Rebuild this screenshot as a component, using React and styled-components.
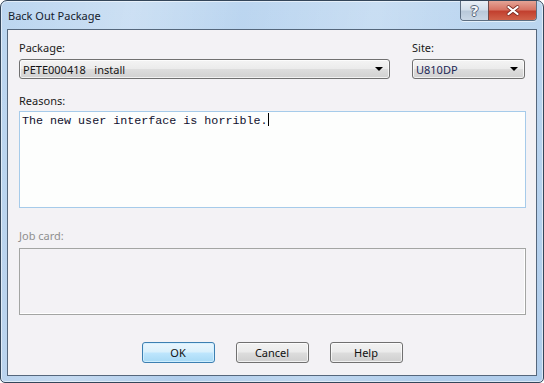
import React from 'react';
import styled, { createGlobalStyle } from 'styled-components';

const GlobalStyle = createGlobalStyle`
  html, body {
    margin: 0;
    padding: 0;
    background: #ffffff;
  }
  body {
    width: 544px;
    height: 383px;
    overflow: hidden;
    font-family: "Noto Sans", "Liberation Sans", sans-serif;
  }
`;

const Window = styled.div`
  box-sizing: border-box;
  width: 544px;
  height: 383px;
  display: flex;
  flex-direction: column;
  padding: 0 6px 6px 6px;
  border: 1px solid #34465a;
  border-radius: 7px 7px 5px 5px;
  background:
    linear-gradient(100deg, rgba(255,255,255,0) 0%, rgba(255,255,255,0.25) 22%, rgba(255,255,255,0) 40%, rgba(255,255,255,0.2) 62%, rgba(255,255,255,0) 80%),
    linear-gradient(to bottom, #bcd6f0, #b0cdeb);
  box-shadow: inset 0 0 0 1px rgba(255,255,255,0.55);
`;

const TitleBar = styled.div`
  height: 28px;
  display: flex;
  align-items: flex-start;
  flex-shrink: 0;
`;

const Title = styled.div`
  flex: 1;
  padding: 7px 0 0 1px;
  font-size: 11px;
  line-height: 15px;
  color: #15202c;
`;

const Controls = styled.div`
  display: flex;
  height: 19px;
  border: 1px solid #5d6e82;
  border-top: none;
  border-radius: 0 0 4px 4px;
  overflow: hidden;
  box-shadow: 0 1px 0 rgba(255,255,255,0.6);
`;

const ControlButton = styled.div`
  width: ${(p) => p.$w}px;
  display: flex;
  align-items: center;
  justify-content: center;
  background: ${(p) =>
    p.$close
      ? 'linear-gradient(to bottom, #e4a496 0%, #d77565 45%, #c2402f 55%, #d0624a 100%)'
      : 'linear-gradient(to bottom, #e9eff6 0%, #d3dfeb 45%, #b9c9da 55%, #c9d7e6 100%)'};
  border-left: ${(p) => (p.$close ? '1px solid #6e4a4a' : 'none')};
`;

const HelpGlyph = styled.span`
  font-family: "DejaVu Sans", sans-serif;
  font-weight: bold;
  font-size: 14px;
  line-height: 14px;
  color: #f4f6f8;
  text-shadow: 1px 0 0 #56657a, -1px 0 0 #56657a, 0 1px 0 #56657a, 0 -1px 0 #56657a;
`;

const CloseIcon = () => (
  <svg width="14" height="11" viewBox="0 0 14 11">
    <path d="M2.5 2 L11.5 9 M11.5 2 L2.5 9" stroke="#7a2a22" strokeWidth="3.6" strokeLinecap="round" />
    <path d="M2.5 2 L11.5 9 M11.5 2 L2.5 9" stroke="#ffffff" strokeWidth="2.2" strokeLinecap="round" />
  </svg>
);

const Client = styled.div`
  flex: 1;
  display: flex;
  flex-direction: column;
  padding: 10px 10px 0 11px;
  background: #f3f2f5;
  border: 1px solid #55677c;
`;

const TopRow = styled.div`
  display: grid;
  grid-template-columns: 371px 113px;
  column-gap: 22px;
`;

const Field = styled.div`
  display: flex;
  flex-direction: column;
`;

const Label = styled.div`
  font-size: 11px;
  line-height: 15px;
  color: ${(p) => (p.$disabled ? '#8f8f8f' : '#1a1a1a')};
  margin-top: ${(p) => p.$top || 0}px;
  margin-bottom: ${(p) => p.$bottom || 4}px;
`;

const Select = styled.div`
  box-sizing: border-box;
  height: 20px;
  display: flex;
  align-items: center;
  padding: 0 6px 0 3px;
  border: 1px solid #707070;
  border-radius: 3px;
  background: linear-gradient(to bottom, #f4f4f4 0%, #ebebeb 48%, #dddddd 52%, #d1d1d1 100%);
  box-shadow: inset 0 0 0 1px rgba(255,255,255,0.7);
  font-size: 11px;
  color: ${(p) => p.$color || '#141414'};
  white-space: pre;
`;

const SelectText = styled.span`
  flex: 1;
`;

const Arrow = styled.span`
  width: 0;
  height: 0;
  border-left: 4px solid transparent;
  border-right: 4px solid transparent;
  border-top: 4px solid #000000;
`;

const TextBox = styled.div`
  box-sizing: border-box;
  height: 97px;
  padding: 1px 2px;
  border: 1px solid #a6cbea;
  background: #fdfefd;
  font-family: "Liberation Mono", "Courier New", monospace;
  font-size: 11.7px;
  line-height: 15px;
  color: #10102e;
`;

const Caret = styled.span`
  display: inline-block;
  width: 1px;
  height: 13px;
  margin-left: 1px;
  vertical-align: -2px;
  background: #000000;
`;

const JobBox = styled.div`
  box-sizing: border-box;
  height: 67px;
  border: 1px solid #a3a5a3;
  box-shadow: inset -1px -1px 0 #ffffff;
  background: #f3f2f5;
`;

const ButtonRow = styled.div`
  display: flex;
  justify-content: center;
  gap: 21px;
  margin-top: 27px;
  margin-left: -11px;
  margin-right: -10px;
`;

const Button = styled.div`
  box-sizing: border-box;
  width: 73px;
  height: 21px;
  display: flex;
  align-items: center;
  justify-content: center;
  border: 1px solid ${(p) => (p.$default ? '#3c7fb1' : '#707070')};
  border-radius: 3px;
  background: ${(p) =>
    p.$default
      ? 'linear-gradient(to bottom, #eaf6fd 0%, #d9f0fc 48%, #bee6fd 52%, #a7d9f5 100%)'
      : 'linear-gradient(to bottom, #f2f2f2 0%, #ebebeb 48%, #dddddd 52%, #cfcfcf 100%)'};
  box-shadow: inset 0 0 0 1px ${(p) => (p.$default ? 'rgba(210,240,255,0.9)' : 'rgba(255,255,255,0.7)')};
  font-size: 11px;
  color: #111111;
`;

export default function App() {
  return (
    <>
      <GlobalStyle />
      <Window>
        <TitleBar>
          <Title>Back Out Package</Title>
          <Controls>
            <ControlButton $w={27}>
              <HelpGlyph>?</HelpGlyph>
            </ControlButton>
            <ControlButton $w={47} $close>
              <CloseIcon />
            </ControlButton>
          </Controls>
        </TitleBar>
        <Client>
          <TopRow>
            <Field>
              <Label>Package:</Label>
              <Select>
                <SelectText>PETE000418   install</SelectText>
                <Arrow />
              </Select>
            </Field>
            <Field>
              <Label>Site:</Label>
              <Select $color="#1b2756">
                <SelectText>U810DP</SelectText>
                <Arrow />
              </Select>
            </Field>
          </TopRow>
          <Label $top={14} $bottom={3}>Reasons:</Label>
          <TextBox>
            The new user interface is horrible.<Caret />
          </TextBox>
          <Label $top={20} $bottom={5} $disabled>Job card:</Label>
          <JobBox />
          <ButtonRow>
            <Button $default>OK</Button>
            <Button>Cancel</Button>
            <Button>Help</Button>
          </ButtonRow>
        </Client>
      </Window>
    </>
  );
}
